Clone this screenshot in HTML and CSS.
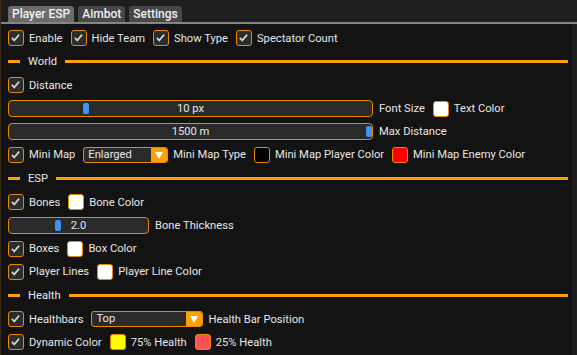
FILE: index.html
```html
<!DOCTYPE html>
<html lang="en">
<head>
    <meta charset="UTF-8">
    <title>ESP Menu</title>
    <link rel="stylesheet" href="styles.css">
</head>
<body>
<div class="window">
    <div class="tabs">
        <div class="tab active">Player ESP</div>
        <div class="tab">Aimbot</div>
        <div class="tab">Settings</div>
    </div>
    <div class="tab-line"></div>

    <div class="content">
        <div class="row">
            <span class="check"><svg viewBox="0 0 16 16"><polyline points="3.5,8.5 6.5,11.5 12.5,4.5"/></svg></span><span class="label">Enable</span>
            <span class="check"><svg viewBox="0 0 16 16"><polyline points="3.5,8.5 6.5,11.5 12.5,4.5"/></svg></span><span class="label">Hide Team</span>
            <span class="check"><svg viewBox="0 0 16 16"><polyline points="3.5,8.5 6.5,11.5 12.5,4.5"/></svg></span><span class="label">Show Type</span>
            <span class="check"><svg viewBox="0 0 16 16"><polyline points="3.5,8.5 6.5,11.5 12.5,4.5"/></svg></span><span class="label">Spectator Count</span>
        </div>

        <div class="row sep"><span class="sep-short"></span><span class="sep-text">World</span><span class="sep-long"></span></div>

        <div class="row">
            <span class="check"><svg viewBox="0 0 16 16"><polyline points="3.5,8.5 6.5,11.5 12.5,4.5"/></svg></span><span class="label">Distance</span>
        </div>
        <div class="row">
            <div class="slider wide"><span class="knob" style="left: 74px"></span>10 px</div><span class="label">Font Size</span>
            <span class="swatch white"></span><span class="label">Text Color</span>
        </div>
        <div class="row">
            <div class="slider wide"><span class="knob" style="left: 357px"></span>1500 m</div><span class="label">Max Distance</span>
        </div>
        <div class="row">
            <span class="check"><svg viewBox="0 0 16 16"><polyline points="3.5,8.5 6.5,11.5 12.5,4.5"/></svg></span><span class="label">Mini Map</span>
            <div class="combo small"><span class="combo-text">Enlarged</span><span class="combo-arrow"><svg viewBox="0 0 10 10"><polygon points="1,2 9,2 5,9"/></svg></span></div><span class="label">Mini Map Type</span>
            <span class="swatch black"></span><span class="label">Mini Map Player Color</span>
            <span class="swatch red"></span><span class="label">Mini Map Enemy Color</span>
        </div>

        <div class="row sep"><span class="sep-short"></span><span class="sep-text">ESP</span><span class="sep-long"></span></div>

        <div class="row">
            <span class="check"><svg viewBox="0 0 16 16"><polyline points="3.5,8.5 6.5,11.5 12.5,4.5"/></svg></span><span class="label">Bones</span>
            <span class="swatch white"></span><span class="label">Bone Color</span>
        </div>
        <div class="row">
            <div class="slider narrow"><span class="knob" style="left: 46px"></span>2.0</div><span class="label">Bone Thickness</span>
        </div>
        <div class="row">
            <span class="check"><svg viewBox="0 0 16 16"><polyline points="3.5,8.5 6.5,11.5 12.5,4.5"/></svg></span><span class="label">Boxes</span>
            <span class="swatch white"></span><span class="label">Box Color</span>
        </div>
        <div class="row">
            <span class="check"><svg viewBox="0 0 16 16"><polyline points="3.5,8.5 6.5,11.5 12.5,4.5"/></svg></span><span class="label">Player Lines</span>
            <span class="swatch white"></span><span class="label">Player Line Color</span>
        </div>

        <div class="row sep"><span class="sep-short"></span><span class="sep-text">Health</span><span class="sep-long"></span></div>

        <div class="row">
            <span class="check"><svg viewBox="0 0 16 16"><polyline points="3.5,8.5 6.5,11.5 12.5,4.5"/></svg></span><span class="label">Healthbars</span>
            <div class="combo large"><span class="combo-text">Top</span><span class="combo-arrow"><svg viewBox="0 0 10 10"><polygon points="1,2 9,2 5,9"/></svg></span></div><span class="label">Health Bar Position</span>
        </div>
        <div class="row">
            <span class="check"><svg viewBox="0 0 16 16"><polyline points="3.5,8.5 6.5,11.5 12.5,4.5"/></svg></span><span class="label">Dynamic Color</span>
            <span class="swatch yellow"></span><span class="label">75% Health</span>
            <span class="swatch salmon"></span><span class="label">25% Health</span>
        </div>
    </div>
</div>
</body>
</html>
```

FILE: styles.css
```css
body {
    margin: 0;
    padding: 0;
    background-color: #1c1c1c;
    font-family: Roboto, "Liberation Sans", Arial, sans-serif;
    font-size: 11.2px;
    color: #e6e6e6;
}

.window {
    width: 577px;
    height: 355px;
    background-color: #1e1e1e;
    border-left: 1px solid #3a2a18;
    box-sizing: border-box;
    display: flex;
    flex-direction: column;
    overflow: hidden;
}

.tabs {
    height: 22px;
    display: flex;
    align-items: flex-end;
    gap: 4px;
    padding-left: 7px;
    box-sizing: border-box;
}

.tab {
    background-color: #474747;
    color: #f0f0f0;
    font-weight: 500;
    font-size: 12px;
    height: 16px;
    line-height: 17px;
    padding: 0 4px;
    border-radius: 3px 3px 0 0;
}

.tab.active {
    background-color: #6b6b6b;
}

.tab-line {
    height: 2px;
    background-color: #858585;
}

.content {
    flex: 1;
    background-color: #131313;
    margin-right: 5px;
    padding: 6px 4px 0 7px;
    display: flex;
    flex-direction: column;
    gap: 7.2px;
}

.row {
    height: 16px;
    display: flex;
    align-items: center;
}

.check {
    width: 16px;
    height: 16px;
    box-sizing: border-box;
    border: 1.5px solid #e88a00;
    border-radius: 3px;
    background-color: #2c2c2c;
    margin-right: 5px;
    display: flex;
}

.check svg {
    width: 13px;
    height: 13px;
    fill: none;
    stroke: #d0d0d0;
    stroke-width: 2.2;
}

.label {
    margin-right: 8px;
    white-space: nowrap;
}

.swatch {
    width: 16px;
    height: 16px;
    box-sizing: border-box;
    border: 1.5px solid #e88a00;
    border-radius: 3px;
    margin-right: 5px;
}

.swatch.white { background-color: #ffffff; }
.swatch.black { background-color: #000000; }
.swatch.red { background-color: #ff0000; }
.swatch.yellow { background-color: #ffff00; }
.swatch.salmon { background-color: #ff5050; }

.slider {
    position: relative;
    height: 17px;
    box-sizing: border-box;
    border: 1px solid #e88a00;
    border-radius: 4px;
    background-color: #2a2a2a;
    text-align: center;
    line-height: 15px;
    margin-right: 6px;
}

.slider.wide { width: 365px; }
.slider.narrow { width: 141px; }

.knob {
    position: absolute;
    top: 2px;
    width: 6px;
    height: 11px;
    border-radius: 2px;
    background-color: #3d95f5;
}

.combo {
    height: 16px;
    box-sizing: border-box;
    border: 1px solid #e88a00;
    border-radius: 3px;
    background-color: #2a2a2a;
    display: flex;
    margin-right: 5px;
    overflow: hidden;
}

.combo.small { width: 85px; }
.combo.large { width: 112px; }

.combo-text {
    flex: 1;
    padding-left: 4px;
    line-height: 14px;
}

.combo-arrow {
    width: 16px;
    background-color: #ffa000;
    display: flex;
    align-items: center;
    justify-content: center;
}

.combo-arrow svg {
    width: 10px;
    height: 10px;
    fill: #ffffff;
}

.sep {
    height: 17px;
}

.sep-short {
    width: 12px;
    height: 3px;
    background-color: #ffa000;
}

.sep-text {
    margin: 0 8px 0 8px;
}

.sep-long {
    flex: 1;
    height: 3px;
    background-color: #ffa000;
}
```
